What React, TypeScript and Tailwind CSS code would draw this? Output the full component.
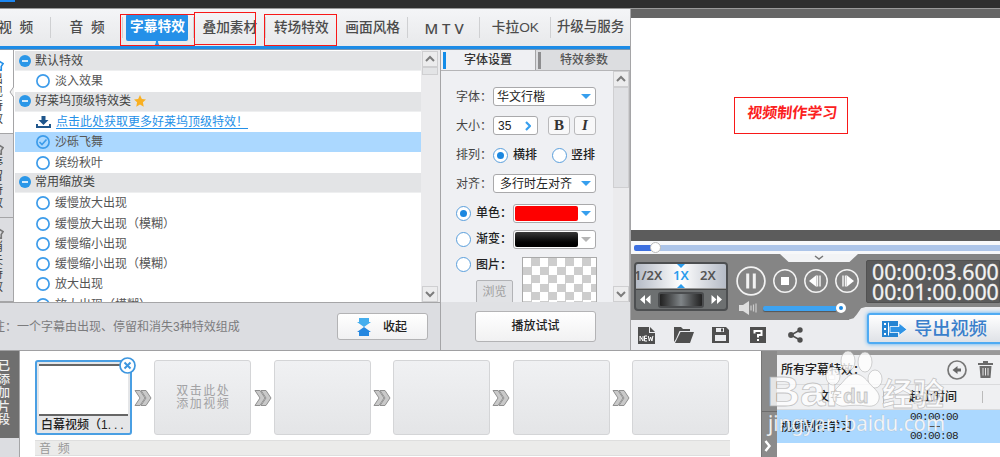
import { Fragment, type ReactNode } from "react";

const menuItems = ["视  频", "音  频", "字幕特效", "叠加素材", "转场特效", "画面风格", "M T V", "卡拉OK"];

interface EffectRow {
    kind: "group" | "item" | "link";
    label: string;
    star?: boolean;
    selected?: boolean;
}

const effects: EffectRow[] = [
    { kind: "group", label: "默认特效" },
    { kind: "item", label: "淡入效果" },
    { kind: "group", label: "好莱坞顶级特效类", star: true },
    { kind: "link", label: "点击此处获取更多好莱坞顶级特效！" },
    { kind: "item", label: "沙砾飞舞", selected: true },
    { kind: "item", label: "缤纷秋叶" },
    { kind: "group", label: "常用缩放类" },
    { kind: "item", label: "缓慢放大出现" },
    { kind: "item", label: "缓慢放大出现（模糊）" },
    { kind: "item", label: "缓慢缩小出现" },
    { kind: "item", label: "缓慢缩小出现（模糊）" },
    { kind: "item", label: "放大出现" },
    { kind: "item", label: "放大出现（模糊）" },
];

function Arrow({ down = false }: { down?: boolean }) {
    return (
        <div className="w-4 h-4 shrink-0 border border-[#cfcfd1] bg-[#ececed] flex items-center justify-center">
            <svg className="w-2.5 h-2" viewBox="0 0 10 8" fill="none" stroke="#7c7c7c" strokeWidth="2">
                <path d={down ? "M1 2l4 4 4-4" : "M1 6l4-4 4 4"} />
            </svg>
        </div>
    );
}

function Radio({ on = false }: { on?: boolean }) {
    return (
        <span className="w-[15px] h-[15px] shrink-0 rounded-full border-[1.5px] border-[#5a9fdc] bg-white flex items-center justify-center">
            {on && <span className="w-[7px] h-[7px] rounded-full bg-[#1b87e0]" />}
        </span>
    );
}

function Caret({ muted = false }: { muted?: boolean }) {
    return (
        <svg className={`w-2.5 h-[5px] ${muted ? "text-[#b5b5b5]" : "text-[#379fee]"}`} viewBox="0 0 10 5">
            <path d="M0 0h10L5 5z" fill="currentColor" />
        </svg>
    );
}

function MenuBar() {
    return (
        <nav className="h-[37px] shrink-0 flex bg-linear-to-b from-[#f4f5f7] to-[#e8e9eb] text-[13.7px] font-medium text-[#4c4c4c]">
            <div className="flex items-center -ml-5">
                {menuItems.map((label, i) => (
                    <div key={label} className="relative w-[71.4px] h-full pt-px flex items-center justify-center whitespace-pre">
                        {i === 2 ? (
                            <div className="relative -left-px -top-px w-[62px] h-[27px] shrink-0 rounded-[2px] bg-[#2490e8] text-white font-bold flex items-center justify-center">
                                {label}
                                <svg className="absolute left-[25px] top-[27px] w-3 h-1.5" viewBox="0 0 12 6">
                                    <path d="M0 6Q5 5 5 0h2Q7 5 12 6z" fill="#2490e8" />
                                </svg>
                            </div>
                        ) : (
                            <span className={i === 6 ? "text-[15px] font-['Noto_Sans',sans-serif]" : ""}>{label}</span>
                        )}
                        {i !== 4 && <span className="absolute right-0 top-2 w-px h-[21px] bg-[#cfd0d2]" />}
                    </div>
                ))}
                <div className="w-[79px] text-center text-[13.5px] whitespace-nowrap">升级与服务</div>
            </div>
        </nav>
    );
}

function SideTab({ label, active = false }: { label: string; active?: boolean }) {
    return (
        <div className={`relative h-[84px] border-r border-b border-[#a5a5a7] flex flex-col pt-[10px] ${active ? "bg-white" : "bg-[#dcdde1]"}`}>
            <svg className={`-ml-[7px] w-[11px] h-[11px] shrink-0 ${active ? "text-[#2490e8]" : "text-[#777]"}`} viewBox="0 0 12 12" fill="none" stroke="currentColor" strokeWidth="1.8">
                <path d="M0 4l6-3 5 3-2 3v4H3" />
            </svg>
            <div className="-ml-[9px] w-3 mt-0.5 text-[12px] leading-[13.3px] text-[#444]">
                {label.split("").map((c, i) => (
                    <div key={i}>{c}</div>
                ))}
            </div>
            {active && (
                <svg className="absolute left-[9px] top-[34px] w-1.5 h-4" viewBox="0 0 6 16">
                    <path d="M6 1L1 8l5 7" fill="#eee" stroke="#a5a5a7" />
                </svg>
            )}
        </div>
    );
}

function EffectLine({ row }: { row: EffectRow }) {
    if (row.kind === "group") {
        return (
            <div className="h-[20.3px] shrink-0 pl-1 flex items-center bg-[#e3e4e6] border-b border-[#eeeff0] text-[#444]">
                <svg className="w-3 h-3 mr-1" viewBox="0 0 12 12">
                    <circle cx="6" cy="6" r="6" fill="#2b97e8" />
                    <path d="M3 6h6" stroke="#fff" strokeWidth="1.6" />
                </svg>
                {row.label}
                {row.star && (
                    <svg className="w-3 h-3 ml-[3px]" viewBox="0 0 24 24">
                        <path d="M12 0l3.7 8 8.3.9-6.2 5.8 1.7 8.6L12 19l-7.5 4.3 1.7-8.6L0 8.9 8.3 8z" fill="#f9b022" />
                    </svg>
                )}
            </div>
        );
    }
    if (row.kind === "link") {
        return (
            <div className="h-[20.3px] shrink-0 pl-[21px] flex items-center text-[#2490e8]">
                <svg className="w-[15px] h-3 mr-[5px]" viewBox="0 0 15 12" fill="#1f568c">
                    <path d="M5.5 0h4v4h3l-5 5-5-5h3z" />
                    <path d="M0 8h2v2h11V8h2v4H0z" />
                </svg>
                <span className="underline underline-offset-2">{row.label}</span>
            </div>
        );
    }
    return (
        <div className={`h-[20.3px] shrink-0 pl-[21px] flex items-center ${row.selected ? "bg-[#abd8ff]" : ""}`}>
            <svg className="w-[14px] h-[14px] mr-[5px]" viewBox="0 0 14 14" fill="none" stroke="#3d9cea" strokeWidth="1.7">
                <circle cx="7" cy="7" r="6.1" />
                {row.selected && <path d="M3.5 7L6 9.5l4.500-5" />}
            </svg>
            {row.label}
        </div>
    );
}

function Field({ label, children, className = "" }: { label: string; children: ReactNode; className?: string }) {
    return (
        <div className={`flex items-center ${className}`}>
            <span className="w-[37px] shrink-0 text-[#444] whitespace-nowrap">{label}</span>
            {children}
        </div>
    );
}

function FontSettings() {
    return (
        <section className="w-[190px] shrink-0 flex flex-col border-l border-[#a5a5a7] bg-[#eff0f3]">
            <div className="h-[21px] shrink-0 flex text-[12px] font-medium border-b border-[#b5b5b7]">
                <div className="w-[95px] flex items-center border-r border-[#a5a5a7]">
                    <span className="w-[3px] h-[17px] ml-0.5 bg-[#128ce8]" />
                    <span className="ml-[18px] text-[#333]">字体设置</span>
                </div>
                <div className="flex-1 flex items-center bg-[#dcdde0] text-[#555]">
                    <span className="w-[3px] h-[17px] ml-0.5 bg-[#8d8d8f]" />
                    <span className="ml-[19px]">特效参数</span>
                </div>
            </div>
            <div className="h-[231px] shrink-0 flex overflow-hidden">
                <div className="w-[172px] pl-[15px] text-[12px] text-[#222] overflow-hidden">
                    <Field label="字体：" className="mt-[16px]">
                        <div className="w-[103px] h-[19px] pl-[3px] pr-1 rounded-[3px] border border-[#a9a9ab] bg-white flex items-center justify-between">
                            华文行楷 <Caret />
                        </div>
                    </Field>
                    <Field label="大小：" className="mt-[10px]">
                        <div className="w-[45px] h-[19px] pl-1 pr-1.5 rounded-[3px] border border-[#a9a9ab] bg-white flex items-center justify-between">
                            35
                            <svg className="w-1.5 h-2.5" viewBox="0 0 6 10" fill="none" stroke="#379fee" strokeWidth="2.2">
                                <path d="M1 1l4 4-4 4" />
                            </svg>
                        </div>
                        <div className="ml-2.5 w-[22px] h-[19px] rounded-[3px] border border-[#b9b9bb] bg-[#f8f8f9] flex items-center justify-center font-['Liberation_Serif',serif] font-bold text-[15px] text-[#333]">B</div>
                        <div className="ml-1 w-[22px] h-[19px] rounded-[3px] border border-[#b9b9bb] bg-[#f8f8f9] flex items-center justify-center font-['Liberation_Serif',serif] font-bold italic text-[15px] text-[#333]">I</div>
                    </Field>
                    <Field label="排列：" className="mt-[10px] h-5">
                        <Radio on />
                        <span className="ml-[5px] mr-[15px] font-medium">横排</span>
                        <Radio />
                        <span className="ml-1 font-medium">竖排</span>
                    </Field>
                    <Field label="对齐：" className="mt-[9px]">
                        <div className="w-[103px] h-[19px] pl-1.5 pr-1 rounded-[3px] border border-[#a9a9ab] bg-white flex items-center justify-between">
                            多行时左对齐 <Caret />
                        </div>
                    </Field>
                    <div className="mt-[10px] h-5 flex items-center">
                        <Radio on />
                        <span className="ml-[5px] w-[37px] font-medium">单色：</span>
                        <div className="w-[83px] h-[19px] p-px pr-1 rounded-[3px] border border-[#a9a9ab] bg-white flex items-center justify-between">
                            <span className="w-[63px] h-[15px] rounded-[2px] bg-[#fe0000]" />
                            <Caret />
                        </div>
                    </div>
                    <div className="mt-1.5 h-5 flex items-center">
                        <Radio />
                        <span className="ml-[5px] w-[37px] font-medium">渐变：</span>
                        <div className="w-[83px] h-[19px] p-px pr-1 rounded-[3px] border border-[#a9a9ab] bg-white flex items-center justify-between">
                            <span className="w-[63px] h-[15px] rounded-[2px] bg-linear-to-b from-[#3a3a3a] to-black" />
                            <Caret muted />
                        </div>
                    </div>
                    <div className="mt-2 flex items-start">
                        <Radio />
                        <div className="ml-[5px] w-[46px] -mt-px">
                            <div className="whitespace-nowrap leading-[18px] font-medium">图片：</div>
                            <div className="mt-[6px] w-[37px] h-6 border border-[#b2b3b6] rounded-[2px] bg-[#e1e2e5] text-[#a0a0a0] text-center leading-[23px]">浏览</div>
                        </div>
                        <div className="w-[75px] h-[60px] border border-[#aaa] bg-[conic-gradient(#cdcdcd_25%,#fff_0_50%,#cdcdcd_0_75%,#fff_0)] bg-size-[17px_17px]" />
                    </div>
                </div>
                <div className="flex-1 flex flex-col bg-[#ebebed] border-r border-[#b5b5b7]">
                    <Arrow />
                    <div className="h-[101px] w-4 bg-[#e0e1e4] border border-[#cfcfd1]" />
                    <div className="mt-auto">
                        <Arrow down />
                    </div>
                </div>
            </div>
            <div className="flex-1 bg-[#e0e1e4] flex items-center justify-center">
                <button className="w-[121px] h-[31px] rounded-[3px] border border-[#b3b3b5] bg-linear-to-b from-white to-[#f1f1f2] text-[12px] font-medium text-[#222]">
                    播放试试
                </button>
            </div>
        </section>
    );
}

function Editor() {
    return (
        <div className="w-[631px] shrink-0 flex flex-col border-r border-[#a5a5a7]">
            <MenuBar />
            <div className="h-[3px] shrink-0 bg-[#1c8be6]" />
            <div className="h-px shrink-0 bg-[#7d97ae]" />
            <div className="flex-1 min-h-0 flex">
                <div className="w-[440px] shrink-0 flex flex-col">
                    <div className="h-[253px] shrink-0 flex border-b border-[#a5a5a7] bg-white">
                        <div className="w-[14px] shrink-0 overflow-hidden bg-[#dcdde1]">
                            <SideTab label="出现特效" active />
                            <SideTab label="停留特效" />
                            <SideTab label="消失特效" />
                        </div>
                        <div className="w-[406px] ml-px pt-px overflow-hidden flex flex-col text-[12px] text-[#555]">
                            {effects.map((row) => (
                                <EffectLine key={row.label} row={row} />
                            ))}
                        </div>
                        <div className="flex-1 bg-[#ebebed] pl-px pt-px flex flex-col">
                            <Arrow />
                            <div className="w-4 h-2 border border-[#cfcfd1] bg-[#e3e4e6]" />
                            <div className="mt-auto">
                                <Arrow down />
                            </div>
                        </div>
                    </div>
                    <div className="flex-1 flex items-center bg-[#dcdde1] text-[12px] text-[#7b7b7d]">
                        <span className="-ml-[7px] w-[344px] whitespace-nowrap">注：一个字幕由出现、停留和消失3种特效组成</span>
                        <button className="w-[91px] h-[27px] pl-[19px] rounded-[3px] border border-[#b3b3b5] bg-linear-to-b from-white to-[#f1f1f2] flex items-center font-medium text-[#222]">
                            <svg className="w-[14px] h-[18px] mr-3" viewBox="0 0 14 18">
                                <path d="M2 0h10v4h2L7 9 0 4h2z" fill="#45aeee" />
                                <path d="M7 9l7 5h-2v4H2v-4H0z" fill="#2587e0" />
                            </svg>
                            收起
                        </button>
                    </div>
                </div>
                <FontSettings />
            </div>
        </div>
    );
}

function Controls() {
    return (
        <div className="relative h-[66px] shrink-0 flex bg-[#858585]">
            {/* fold handle */}
            <div className="absolute left-[149px] top-0 w-[78px] h-2 bg-[#f2f3f5] [clip-path:polygon(0_0,100%_0,89%_100%,11%_100%)] flex justify-center">
                <svg className="w-2.5 h-1.5 mt-px" viewBox="0 0 10 6" fill="none" stroke="#777" strokeWidth="1.5">
                    <path d="M1 1l4 3 4-3" />
                </svg>
            </div>
            <div className="ml-[3px] mt-2 w-[94px] h-[49px] rounded-[4px] border-2 border-[#4d4f51] bg-[#6d7071] overflow-hidden">
                <div className="relative h-[25px] bg-linear-to-r from-[#b5bbc6] via-white to-[#b5bbc6] border-b border-[#999] flex items-center text-[13px] font-semibold text-[#555] font-['Noto_Sans',sans-serif]">
                    <span className="-ml-[2px] w-[39px]">1/2X</span>
                    <span className="w-[27px] text-[#2b9cec]">1X</span>
                    <span>2X</span>
                    <span className="absolute left-[41px] top-0 border-x-4 border-t-4 border-x-transparent border-t-[#2b9cec]" />
                    <span className="absolute left-[41px] bottom-0 border-x-4 border-b-4 border-x-transparent border-b-[#2b9cec]" />
                </div>
                <div className="h-[20px] border-t border-[#484a4b] flex items-center justify-between px-1">
                    <svg className="w-[11px] h-[9px]" viewBox="0 0 11 9" fill="#fff">
                        <path d="M5 0v9L0 4.5zM10.5 0v9l-5-4.500z" />
                    </svg>
                    <span className="w-[46px] h-4 rounded-[3px] border-2 border-[#4a4c4e] bg-linear-to-r from-[#222] via-[#808588] to-[#222]" />
                    <svg className="w-[11px] h-[9px]" viewBox="0 0 11 9" fill="#fff">
                        <path d="M.5 0v9l5-4.500zM6 0v9l5-4.500z" />
                    </svg>
                </div>
            </div>
            <div className="ml-2 w-[125px] pt-3">
                <div className="flex items-center">
                    <svg className="w-[30px] h-[30px] shrink-0" viewBox="0 0 30 30" fill="none" stroke="#f2f2f2">
                        <circle cx="15" cy="15" r="13.9" strokeWidth="1.7" />
                        <path d="M11.7 7.5v15M18.3 7.5v15" strokeWidth="3" />
                    </svg>
                    <svg className="w-6 h-6 ml-[7px] shrink-0" viewBox="0 0 24 24" fill="none" stroke="#f2f2f2" strokeWidth="1.5">
                        <circle cx="12" cy="12" r="11.2" />
                        <path d="M8 8h8v8H8z" fill="#fff" stroke="none" />
                    </svg>
                    <svg className="w-6 h-6 ml-[7px] shrink-0" viewBox="0 0 24 24" fill="none" stroke="#f2f2f2" strokeWidth="1.5">
                        <circle cx="12" cy="12" r="11.2" />
                        <path d="M12.5 6v12L5 12z" fill="#fff" stroke="none" />
                        <path d="M13.5 6.5v11M16 6.5v11" />
                    </svg>
                    <svg className="w-6 h-6 ml-[7px] shrink-0" viewBox="0 0 24 24" fill="none" stroke="#f2f2f2" strokeWidth="1.5">
                        <circle cx="12" cy="12" r="11.2" />
                        <path d="M11.5 6v12l7.500-6z" fill="#fff" stroke="none" />
                        <path d="M10.5 6.5v11M8 6.5v11" />
                    </svg>
                </div>
                <div className="flex items-center ml-[3px] mt-[5px]">
                    <svg className="w-[19px] h-[14px] shrink-0" viewBox="0 0 19 14">
                        <path d="M0 4h4l6-4v14L4 10H0z" fill="#dedede" />
                        <path d="M12 4.5v5M14.5 3.5v7M17 2.5v9" stroke="#ccc" strokeWidth="1.2" />
                    </svg>
                    <div className="ml-[5px] w-[73px] h-[5px] rounded-l-[2px] bg-[#3da3f2] shadow-[0_1px_1px_#555]" />
                    <span className="w-[10px] h-[10px] shrink-0 rounded-full border-[3px] border-white bg-[#1b87e0]" />
                </div>
            </div>
            <div className="ml-[5px] mt-1.5 flex-1 h-[43px] rounded-l-[2px] bg-[#5b5b5b] border border-[#515151] pl-[5px] pt-px text-[21.3px] leading-5 text-[#f2f2f2] font-['Noto_Sans',sans-serif] whitespace-nowrap [-webkit-text-stroke:0.3px_#f2f2f2]">
                <div>00:00:03.600</div>
                <div>00:01:00.000</div>
            </div>
        </div>
    );
}

function Toolbar() {
    return (
        <div className="relative h-[30px] shrink-0 bg-[#ebecef] flex items-center">
            <div className="flex items-center pl-[7px] text-[#4f4f4f]">
                <svg className="w-[17px] h-[17px]" viewBox="0 0 17 17" fill="currentColor">
                    <path d="M0 0h11v6h6v11H0z" />
                    <path d="M12 0l5 5h-5z" />
                    <path d="M2 14V9l3 5V9M9 9H6.5v5H9M6.5 11.5H9M10.3 9l1 5 1.300-4 1.300 4 1-5" fill="none" stroke="#fff" strokeWidth="1" />
                </svg>
                <svg className="w-5 h-4 ml-[19px]" viewBox="0 0 20 16" fill="currentColor">
                    <path d="M0 0h7l2 2h7v2H5.5L2 12l-2 3z" />
                    <path d="M6.5 5H20l-4 11H1z" />
                </svg>
                <svg className="w-[17px] h-4 ml-[18px]" viewBox="0 0 17 16">
                    <path d="M0 0h14l3 3v13H0z" fill="currentColor" />
                    <path d="M4 1h8v4H4zM3 8h11v6H3z" fill="#ebecef" />
                    <path d="M9 1.5h2v3H9z" fill="currentColor" />
                </svg>
                <svg className="w-4 h-4 ml-[21px]" viewBox="0 0 16 16">
                    <path d="M0 0h16v16H0z" fill="currentColor" />
                    <path d="M4.5 6.5V4h7v4H8v2.5M8 12v2" fill="none" stroke="#fff" strokeWidth="2" />
                </svg>
                <svg className="w-[15px] h-4 ml-[22px]" viewBox="0 0 15 16" fill="currentColor">
                    <path d="M12 3L3 8l9 5" fill="none" stroke="currentColor" strokeWidth="1.5" />
                    <circle cx="12" cy="3" r="2.7" />
                    <circle cx="3" cy="8" r="2.9" />
                    <circle cx="12" cy="13" r="2.7" />
                </svg>
            </div>
            {/* export area rises into the transport bar */}
            <div className="absolute right-0 bottom-0 w-[151px] h-[43px] bg-[#ebecef] [clip-path:polygon(0_100%,0_29%,3%_26%,5%_18%,8%_3%,11%_0,100%_0,100%_100%)] pl-[18px] pt-1.5 overflow-hidden">
                <button className="w-[140px] h-[31px] pl-[13px] rounded-[3px] border-2 border-[#4fabf3] bg-linear-to-b from-white to-[#dfe2e7] shadow-[0_0_4px_#4fabf3] flex items-center text-[18.3px] font-medium text-[#3a7fcb] whitespace-nowrap">
                    <svg className="w-[25px] h-4 mr-[7px] shrink-0" viewBox="0 0 25 16">
                        <path d="M0 0h16v16H0z" fill="#2584d2" />
                        <path d="M2 2h2v2H2zM2 7h2v2H2zM2 12h2v2H2zM6 1.5h1v13H6z" fill="#fff" />
                        <path d="M8 5.5h9V2l8 6.5-8 6v-3H8z" fill="#2f94e6" stroke="#fff" strokeWidth=".8" />
                    </svg>
                    导出视频
                </button>
            </div>
        </div>
    );
}

function Preview() {
    return (
        <div className="flex-1 min-w-0 flex flex-col">
            <div className="h-[9px] shrink-0 bg-[#666]" />
            <div className="h-[212px] shrink-0 bg-white flex justify-center">
                <div className="mt-[79px] ml-[-49px] w-[114px] h-[37px] border border-[#f81818] flex justify-center text-[15px] leading-[29px] font-bold text-[#fb2020] whitespace-nowrap">
                    <span className="ml-[3px] -skew-x-6">视频制作学习</span>
                </div>
            </div>
            <div className="h-[11px] shrink-0 bg-[#5c5c5c]" />
            <div className="h-[13px] shrink-0 bg-[#f7f8fa] flex items-center pl-[3px]">
                <div className="w-[17px] h-1.5 rounded-l-[2px] bg-[#3c6fe0]" />
                <div className="w-[11px] h-[11px] -ml-px shrink-0 rounded-full bg-white border border-[#bbb] z-10" />
                <div className="flex-1 h-1.5 -ml-px bg-[#adc5e9]" />
            </div>
            <Controls />
            <Toolbar />
        </div>
    );
}

function Timeline() {
    return (
        <div className="w-[761px] shrink-0 flex bg-white">
            <div className="w-5 shrink-0 border-r border-[#a5a5a7] bg-[#dcdde1] overflow-hidden">
                <div className="h-[87px] pt-[9px] bg-[#6f6f6f] text-[12px] leading-[13.5px] font-medium text-[#f0f0f0]">
                    <div className="w-3 -ml-[2px]">已添加片段</div>
                </div>
            </div>
            <div className="pl-[15px] pt-[9px]">
                <div className="flex items-center">
                    {[0, 1, 2, 3, 4, 5].map((i) => (
                        <Fragment key={i}>
                            {i === 0 ? (
                                <div className="relative w-[97px] h-[75px] rounded-[3px] border-2 border-[#4a9fe3] bg-[#e5e6e8] px-0.5 pt-0.5">
                                    <div className="h-[52px] bg-white border-y-2 border-[#666]" />
                                    <div className="pl-0.5 pt-px text-[12px] leading-[17px] text-[#222] font-medium whitespace-nowrap">
                                        白幕视频（1<span className="tracking-[3px]">...</span>
                                    </div>
                                    <svg className="absolute -top-[5px] -right-[6px] w-[17px] h-[17px]" viewBox="0 0 17 17" stroke="#3d96df" strokeWidth="1.7">
                                        <circle cx="8.5" cy="8.5" r="7.5" fill="#fff" />
                                        <path d="M5.5 5.5l6 6M11.5 5.5l-6 6" strokeWidth="2" />
                                    </svg>
                                </div>
                            ) : (
                                <div className="w-[97px] h-[75px] rounded-[3px] border border-[#d4d5d7] bg-linear-to-b from-[#f0f1f3] to-[#e4e5e7] flex items-center justify-center text-center text-[12px] leading-[13.5px] tracking-[1.5px] text-[#a2a2a4]">
                                    {i === 1 && (
                                        <span className="ml-px pt-px">
                                            双击此处
                                            <br />
                                            添加视频
                                        </span>
                                    )}
                                </div>
                            )}
                            {i < 5 && (
                                <svg className="w-[18px] h-4 mx-[2.2px] shrink-0" viewBox="0 0 18 16" fill="#c9c9c9" stroke="#8f8f8f">
                                    <path d="M1 .5h5L11 8l-5 7.500H1L6 8z" />
                                    <path d="M7 .5h5L17 8l-5 7.500H7L12 8z" />
                                </svg>
                            )}
                        </Fragment>
                    ))}
                </div>
                <div className="mt-[5px] w-[695px] h-4 bg-[#ebebea] border-y border-[#dedede] pl-1 text-[12px] leading-[16px] text-[#999] whitespace-pre">音  频</div>
            </div>
        </div>
    );
}

function CaptionList() {
    return (
        <div className="flex-1 min-w-0 flex">
            <div className="w-4 shrink-0 bg-[#8b8b8b] border-l border-[#777] flex flex-col">
                <div className="h-[61px] border-b border-[#6c6c6c]" />
                <svg className="w-2 h-3 mt-7 ml-0.5" viewBox="0 0 8 12" fill="none" stroke="#fff" strokeWidth="2.4">
                    <path d="M1.5 1l4 5-4 5" />
                </svg>
            </div>
            <div className="flex-1 min-w-0 flex flex-col border-t-4 border-[#999] bg-white text-[12px] text-[#222]">
                <div className="h-[29px] shrink-0 bg-[#eff0f2] flex items-center pl-1 font-medium">
                    <span className="w-[166px]">所有字幕特效：</span>
                    <svg className="w-5 h-5 shrink-0" viewBox="0 0 20 20" fill="none" stroke="#777" strokeWidth="1.7">
                        <circle cx="10" cy="10" r="9" />
                        <path d="M5.5 10l5-4v2.5H14v3h-3.5V14z" fill="#666" stroke="none" />
                    </svg>
                    <svg className="w-[15px] h-[17px] ml-[11px]" viewBox="0 0 15 17">
                        <path d="M0 2h5V0h5v2h5v2H0zM1.5 5h12l-1 12h-10z" fill="#6b6b6b" />
                        <path d="M5 7v7.5M7.5 7v7.5M10 7v7.5" stroke="#e5e5e5" strokeWidth="1" />
                    </svg>
                </div>
                <div className="h-[26px] shrink-0 bg-[#eff0f2] border-t border-b border-[#dadbdd] flex items-center font-medium">
                    <span className="w-[106px] text-center">文字</span>
                    <span className="w-px h-3 bg-[#bbb]" />
                    <span className="w-[98px] pl-[25px]">起止时间</span>
                    <span className="w-px h-3 bg-[#bbb]" />
                </div>
                <div className="h-[33px] shrink-0 bg-[#abd8ff] flex items-center">
                    <span className="w-[133px] pl-[3px] font-medium">视频制作学习</span>
                    <div className="w-12 font-['Liberation_Mono',monospace] text-[11px] leading-[10px] tracking-[-0.6px] whitespace-nowrap">
                        <div>00:00:00</div>
                        <div className="h-[9px] flex justify-center items-center">
                            <span className="w-3 h-px bg-[#555]" />
                        </div>
                        <div>00:00:08</div>
                    </div>
                </div>
            </div>
        </div>
    );
}

function Watermark() {
    return (
        <svg className="absolute left-[760px] top-[345px] w-[195px] h-[100px] pointer-events-none" viewBox="0 0 195 100" fill="#fff" fillOpacity=".78" stroke="#aaa" strokeOpacity=".65" strokeWidth=".8">
            <text x="7" y="61" fontSize="42" fontWeight="700" fontFamily="Liberation Sans, sans-serif" textLength="71" lengthAdjust="spacingAndGlyphs">Bai</text>
            <ellipse cx="88" cy="16" rx="7" ry="10" />
            <ellipse cx="105" cy="17" rx="7" ry="10" />
            <ellipse cx="73" cy="31" rx="7" ry="9" />
            <ellipse cx="115" cy="34" rx="7" ry="9" />
            <path d="M95 29c8 0 12 7 17 12s8 8 7 13-5 8-12 7-16-1-22 0-12-3-12-9 4-9 8-13 7-10 14-10z" />
            <text x="83" y="58" fontSize="21" fontWeight="700" fill="#dedede" fontFamily="Liberation Sans, sans-serif">du</text>
            <text x="122" y="60" fontSize="31" fontWeight="700" fontFamily="Noto Sans CJK SC, sans-serif">经验</text>
            <text x="8" y="86" fontSize="21" fillOpacity=".95" strokeOpacity=".3" fontFamily="Noto Sans, sans-serif" textLength="177" lengthAdjust="spacingAndGlyphs">jingyan.baidu.com</text>
        </svg>
    );
}

export default function App() {
    return (
        <div className="relative w-[1000px] h-[457px] overflow-hidden flex flex-col bg-[#2e2e2e] font-['Liberation_Sans','Noto_Sans_CJK_SC',sans-serif]">
            <div className="h-[9px] shrink-0 border-b border-[#999]">
                <div className="w-[15px] h-0.5 bg-[#1c86f0]" />
            </div>
            <div className="h-[342px] shrink-0 flex border-b border-[#a0a0a2]">
                <Editor />
                <Preview />
            </div>
            <div className="flex-1 min-h-0 flex">
                <Timeline />
                <CaptionList />
            </div>
            {/* highlighted menu entries */}
            <div className="absolute left-[120px] top-[14px] w-[75px] h-8 border border-[#f81818]" />
            <div className="absolute left-[194px] top-3 w-[62px] h-[33px] border border-[#f81818]" />
            <div className="absolute left-[264px] top-[14px] w-[73px] h-8 border border-[#f81818]" />
            <Watermark />
        </div>
    );
}
